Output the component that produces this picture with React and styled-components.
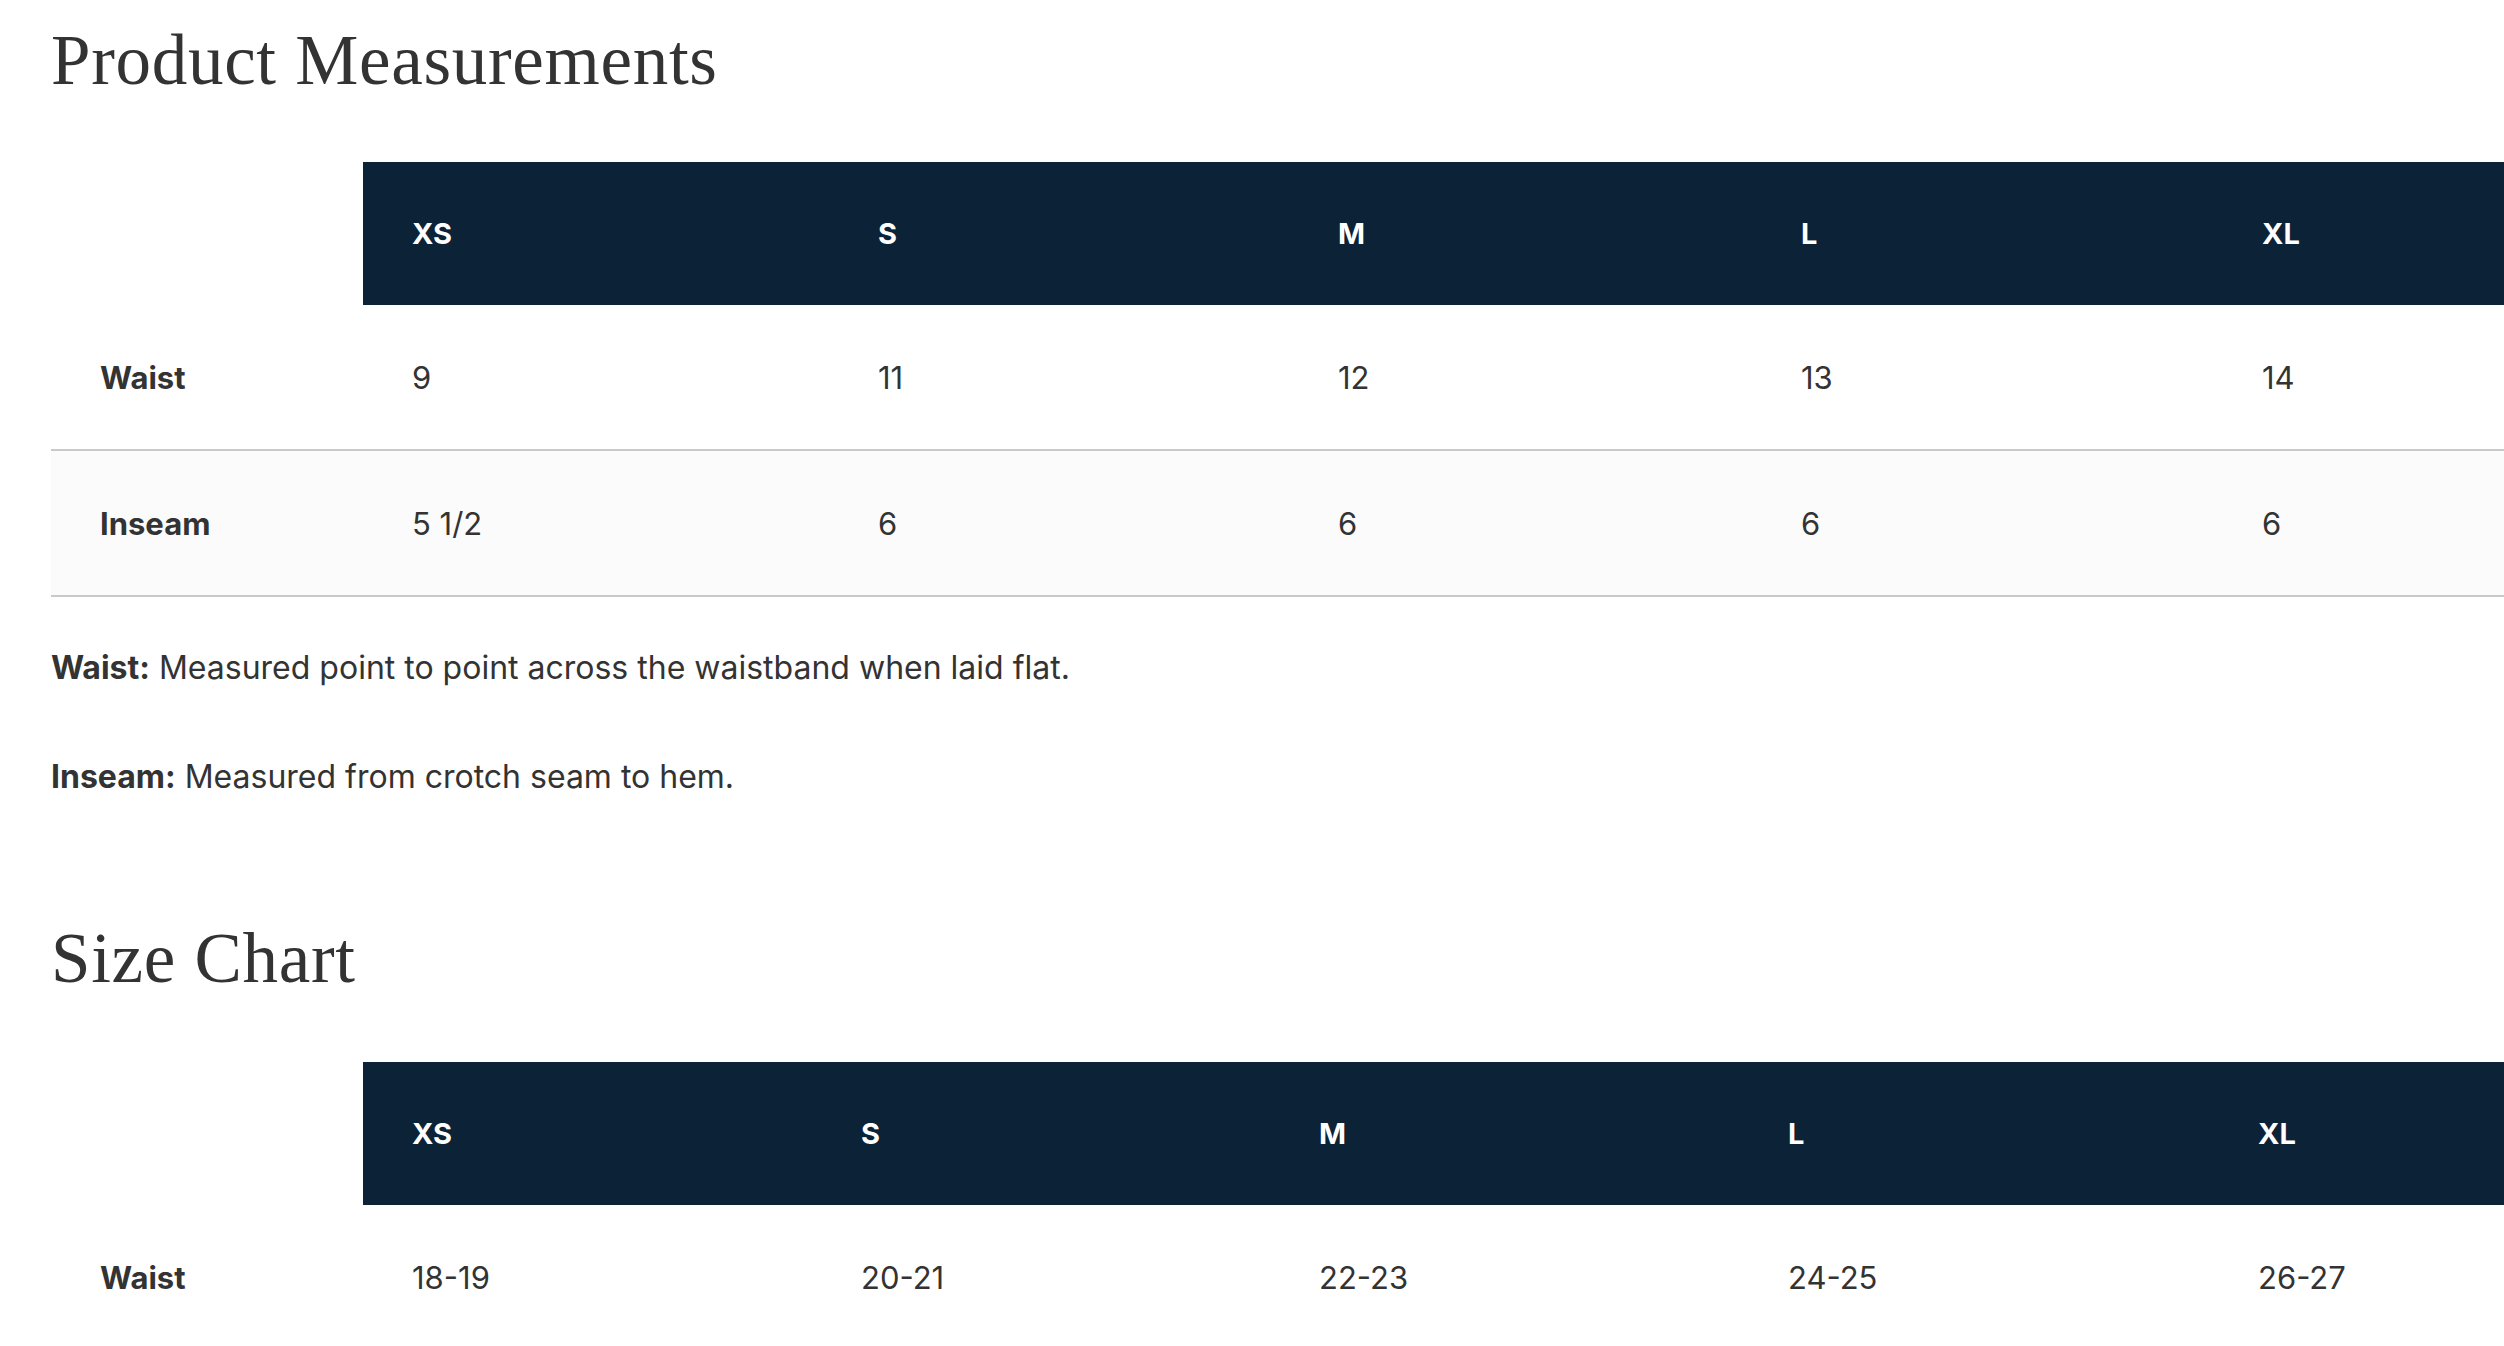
import React from "react";
import styled, { createGlobalStyle } from "styled-components";

const GlobalStyle = createGlobalStyle`
  html, body {
    margin: 0;
    padding: 0;
    background: #ffffff;
    overflow: hidden;
  }
  body {
    font-family: Inter, "Noto Sans", sans-serif;
    color: #333333;
  }
`;

const Page = styled.main`
  padding: 25px 0 0 51px;
  width: 2700px;
`;

const Title = styled.h2`
  margin: ${(p) => p.$top || 0}px 0 0 0;
  font-family: "Liberation Serif", "DejaVu Serif", serif;
  font-weight: 400;
  font-size: 71px;
  line-height: 1;
  color: #333333;
  letter-spacing: 0.7px;
`;

const Table = styled.div`
  margin-top: ${(p) => p.$top}px;
  display: flex;
  flex-direction: column;
`;

const Row = styled.div`
  display: grid;
  grid-template-columns: ${(p) => p.$cols};
  height: ${(p) => (p.$head ? 143 : 144)}px;
  background: ${(p) => (p.$shaded ? "#fbfbfb" : "transparent")};
  border-bottom: ${(p) => (p.$head || p.$last ? "none" : "2px solid #c9c9c9")};
`;

const HeadCell = styled.div`
  display: flex;
  align-items: center;
  padding: 0 49px;
  background: ${(p) => (p.$blank ? "transparent" : "#0c2237")};
  color: #ffffff;
  font-weight: 700;
  font-size: 29px;
`;

const LabelCell = styled.div`
  display: flex;
  align-items: center;
  padding: 0 49px;
  font-weight: 700;
  font-size: 31px;
  color: #333333;
`;

const ValueCell = styled.div`
  display: flex;
  align-items: center;
  padding: 0 49px;
  font-weight: 400;
  font-size: 31px;
  color: #333333;
`;

const Notes = styled.div`
  margin-top: 48px;
  display: flex;
  flex-direction: column;
  gap: 64px;
`;

const Note = styled.p`
  margin: 0;
  font-size: 32px;
  line-height: 45px;
  color: #333333;
  strong {
    font-weight: 700;
  }
`;

const sizes = ["XS", "S", "M", "L", "XL"];

function SizeTable({ cols, rows, top }) {
  return (
    <Table $top={top}>
      <Row $head $cols={cols}>
        <HeadCell $blank />
        {sizes.map((s) => (
          <HeadCell key={s}>{s}</HeadCell>
        ))}
      </Row>
      {rows.map((r, i) => (
        <Row
          key={r.label}
          $cols={cols}
          $shaded={i % 2 === 1}
          $last={r.last}
        >
          <LabelCell>{r.label}</LabelCell>
          {r.values.map((v, j) => (
            <ValueCell key={j}>{v}</ValueCell>
          ))}
        </Row>
      ))}
    </Table>
  );
}

export default function App() {
  return (
    <>
      <GlobalStyle />
      <Page>
        <Title>Product Measurements</Title>
        <SizeTable
          top={66}
          cols="312px 466px 460px 463px 461px 461px"
          rows={[
            { label: "Waist", values: ["9", "11", "12", "13", "14"] },
            { label: "Inseam", values: ["5 1/2", "6", "6", "6", "6"] },
          ]}
        />
        <Notes>
          <Note>
            <strong>Waist:</strong> Measured point to point across the waistband when laid flat.
          </Note>
          <Note>
            <strong>Inseam:</strong> Measured from crotch seam to hem.
          </Note>
        </Notes>
        <Title $top={124}>Size Chart</Title>
        <SizeTable
          top={68}
          cols="312px 449px 458px 469px 470px 470px"
          rows={[
            { label: "Waist", values: ["18-19", "20-21", "22-23", "24-25", "26-27"], last: true },
          ]}
        />
      </Page>
    </>
  );
}
